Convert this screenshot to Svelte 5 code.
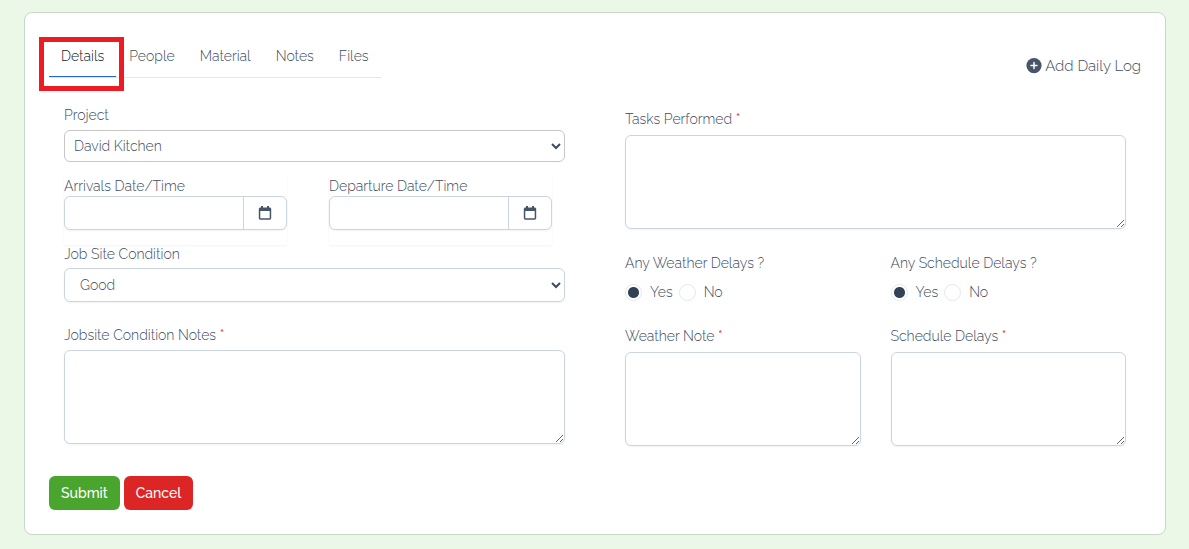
<script>
  const tabs = ['Details', 'People', 'Material', 'Notes', 'Files'];
  let active = $state('Details');
  let weather = $state('Yes');
  let schedule = $state('Yes');
</script>

{#snippet calendar()}
  <svg width="14" height="16" viewBox="0 0 14 16" aria-hidden="true">
    <path fill="#475569" fill-rule="evenodd" d="M3 1h2v1.5h4V1h2v1.5h.6c1 0 1.6.7 1.6 1.6v9c0 1-.7 1.6-1.6 1.6H2.4c-1 0-1.6-.7-1.6-1.6v-9c0-1 .7-1.6 1.6-1.6H3zM2.3 6v7.2h9.4V6z" />
  </svg>
{/snippet}

{#snippet dateField(id, label)}
  <div class="date">
    <label for={id}>{label}</label>
    <div class="group">
      <input {id} type="text" />
      <button type="button" aria-label="Pick {label}">{@render calendar()}</button>
    </div>
  </div>
{/snippet}

<main class="card">
  <header>
    <div class="tabs" role="tablist">
      {#each tabs as tab}
        <button
          type="button"
          role="tab"
          class:active={active === tab}
          class:marked={tab === 'Details'}
          aria-selected={active === tab}
          onclick={() => (active = tab)}>{tab}</button>
      {/each}
    </div>
    <a class="add" href="#add">
      <svg width="16" height="16" viewBox="0 0 16 16" aria-hidden="true">
        <circle cx="8" cy="7.6" r="7.6" fill="#475569" />
        <path d="M8 4.6v6M5 7.6h6" stroke="#fff" stroke-width="1.5" stroke-linecap="round" />
      </svg>
      Add Daily Log
    </a>
  </header>

  <form onsubmit={(e) => e.preventDefault()}>
    <div class="columns">
      <div class="left">
        <div class="field">
          <label for="project">Project</label>
          <select id="project" class="project"><option>David Kitchen</option></select>
        </div>
        <div class="dates">
          {@render dateField('arrival', 'Arrivals Date/Time')}
          {@render dateField('departure', 'Departure Date/Time')}
        </div>
        <div class="field tight">
          <label for="condition">Job Site Condition</label>
          <select id="condition" class="condition"><option>Good</option></select>
        </div>
        <div class="field notes">
          <label for="notes">Jobsite Condition Notes <span class="req">*</span></label>
          <textarea id="notes"></textarea>
        </div>
      </div>

      <div class="right">
        <div class="field">
          <label for="tasks">Tasks Performed <span class="req">*</span></label>
          <textarea id="tasks"></textarea>
        </div>
        <div class="pair">
          <fieldset>
            <legend>Any Weather Delays ?</legend>
            <div class="radios">
              <label><input type="radio" name="weather" value="Yes" bind:group={weather} />Yes</label>
              <label><input type="radio" name="weather" value="No" bind:group={weather} />No</label>
            </div>
          </fieldset>
          <fieldset>
            <legend>Any Schedule Delays ?</legend>
            <div class="radios">
              <label><input type="radio" name="schedule" value="Yes" bind:group={schedule} />Yes</label>
              <label><input type="radio" name="schedule" value="No" bind:group={schedule} />No</label>
            </div>
          </fieldset>
          <div class="field">
            <label for="weather-note">Weather Note <span class="req">*</span></label>
            <textarea id="weather-note"></textarea>
          </div>
          <div class="field">
            <label for="schedule-note">Schedule Delays <span class="req">*</span></label>
            <textarea id="schedule-note"></textarea>
          </div>
        </div>
      </div>
    </div>

    <div class="actions">
      <button type="submit" class="submit">Submit</button>
      <button type="button" class="cancel">Cancel</button>
    </div>
  </form>
</main>

<style>
  :global(body) {
    background: #ebf7e7;
  }
  .card, .card * {
    box-sizing: border-box;
  }
  .card {
    margin: 12px 23px 14px 24px;
    padding: 24px;
    background: #fff;
    border: 1px solid #c8d8c8;
    border-radius: 8px;
    font: 300 14px/20px Raleway, Lato, sans-serif;
    color: #3d4b5f;
  }
  button, input, select, textarea {
    font: inherit;
    color: inherit;
  }
  header {
    display: flex;
    justify-content: space-between;
    align-items: flex-start;
  }
  .tabs {
    display: flex;
    gap: 1px;
    border-bottom: 1px solid #e2e8f0;
  }
  .tabs button {
    position: relative;
    padding: 9px 12px 10px;
    border: 0;
    border-bottom: 1px solid transparent;
    background: none;
  }
  .tabs button.active {
    color: #0f172a;
    border-color: #2563eb;
  }
  .marked::after {
    content: '';
    position: absolute;
    inset: 0 -8px -15px -10px;
    border: 5px solid #ed1c24;
    pointer-events: none;
  }
  .add {
    display: flex;
    align-items: center;
    gap: 3px;
    margin-top: 19px;
    font-size: 15px;
    color: inherit;
    text-decoration: none;
  }
  .columns {
    display: grid;
    grid-template-columns: repeat(2, minmax(0, 1fr));
    gap: 60px;
    padding: 27px 15px 0;
  }
  .field {
    display: flex;
    flex-direction: column;
    gap: 5px;
  }
  .field.tight {
    gap: 4px;
  }
  .right {
    padding-top: 4px;
  }
  .right .field {
    gap: 6px;
  }
  label, legend {
    display: block;
    height: 20px;
  }
  .req {
    color: #ef4444;
    font-weight: 500;
  }
  select, textarea, .group {
    width: 100%;
    border: 1px solid #cbd5e1;
    border-radius: 6px;
    background: #fff;
    box-shadow: 0 1px 2px rgb(0 0 0 / 5%);
  }
  textarea {
    display: block;
    height: 94px;
    padding: 8px 12px;
    resize: both;
  }
  .project {
    height: 32px;
    padding: 0 0 0 5px;
    border-color: #c6c6c6;
    box-shadow: none;
  }
  .condition {
    height: 34px;
    padding: 0 0 0 11px;
  }
  .dates {
    display: grid;
    grid-template-columns: repeat(2, minmax(0, 1fr));
    gap: 42px;
    padding-right: 13px;
    margin-top: 14px;
  }
  .date {
    padding-bottom: 15px;
    margin-bottom: -1px;
    box-shadow: 0 1px 2px rgb(0 0 0 / 5%);
  }
  .group {
    display: flex;
    height: 34px;
  }
  .group input {
    flex: 1;
    min-width: 0;
    padding: 0 12px;
    border: 0;
    background: none;
  }
  .group button {
    display: grid;
    place-items: center;
    width: 43px;
    padding: 0;
    border: 0;
    border-left: 1px solid #cbd5e1;
    background: none;
  }
  .notes {
    margin-top: 23px;
  }
  .pair {
    display: grid;
    grid-template-columns: repeat(2, minmax(0, 1fr));
    gap: 24px 30px;
    margin-top: 24px;
  }
  fieldset {
    min-width: 0;
    margin: 0;
    padding: 0;
    border: 0;
  }
  legend {
    padding: 0;
  }
  .radios {
    display: flex;
    gap: 6px;
    padding-top: 9px;
  }
  .radios label {
    display: flex;
    align-items: center;
    gap: 8px;
  }
  .radios input {
    appearance: none;
    width: 17px;
    height: 17px;
    margin: 0;
    border: 1px solid #e2e8f0;
    border-radius: 50%;
    background: #fff;
  }
  .radios input:checked {
    background: radial-gradient(circle, #334155 5px, #fff 6px);
  }
  .actions {
    display: flex;
    gap: 4px;
    padding-top: 30px;
  }
  .actions button {
    height: 34px;
    padding: 0 12px;
    border: 0;
    border-radius: 6px;
    color: #fff;
    font-weight: 500;
  }
  .submit {
    background: #4aa52e;
  }
  .cancel {
    background: #dc2626;
  }
</style>
